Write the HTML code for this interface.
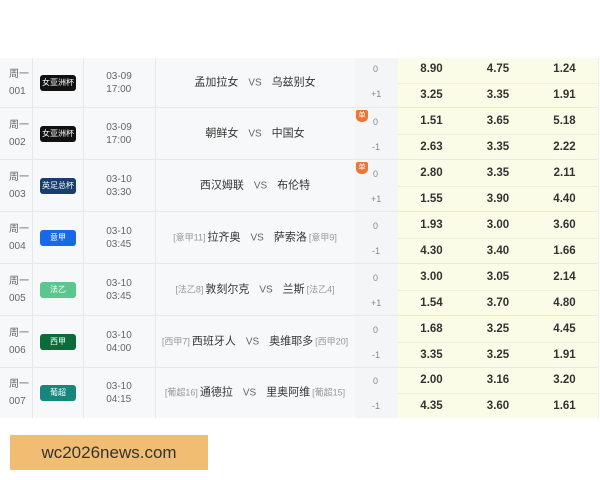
<!DOCTYPE html>
<html><head><meta charset="utf-8"><style>
body{margin:0;width:600px;height:480px;background:#fff;position:relative;overflow:hidden;font-family:"Liberation Sans","Noto Sans CJK SC",sans-serif;}
.row{position:absolute;left:0;width:598px;border-bottom:1px solid #e6e8eb;background:#f7f8f9;}
.c{position:absolute;top:0;bottom:0;border-right:1px solid #e6e8eb;}
.wk{left:0;width:33px;font-size:10px;color:#666;line-height:17px;padding-left:9px;box-sizing:border-box;display:flex;flex-direction:column;justify-content:center;}
.lg{left:33px;width:50px;display:flex;align-items:center;justify-content:center;}
.lg span{display:block;width:36px;height:16px;border-radius:3px;color:#fff;font-size:8px;line-height:16px;text-align:center;white-space:nowrap;overflow:hidden;}
.tm{left:83px;width:72px;font-size:10px;color:#666;line-height:13px;display:flex;flex-direction:column;justify-content:center;align-items:center;}
.tt{left:155px;width:200px;font-size:11px;color:#333;text-align:center;white-space:nowrap;}
.tt p{margin:0;position:absolute;left:0;right:0;top:50%;transform:translateY(-50%);line-height:14px;}
.tt .vs{color:#666;margin:0 10px;font-size:10px;}
.tt .r{color:#999;font-size:9px;margin:0 2px;}
.hc{left:355px;width:43px;background:#f4f5f6;font-size:9px;color:#888;}
.hc div{position:absolute;left:18px;}
.od{background:#fbfce8;font-size:11.5px;font-weight:bold;color:#333;border-right:1px solid #eef0dc;}
.od div{position:absolute;left:0;right:0;text-align:center;}
.od .hl{position:absolute;left:0;right:0;border-top:1px solid #eef0dc;}
.hc .dan{left:1px;width:12px;height:12px;background:#e9773a;border-radius:2px 2px 5px 5px;color:#fff;font-size:7px;line-height:12px;text-align:center;}
.wm{position:absolute;left:10px;top:435px;width:198px;height:35px;background:#f0bd72;color:#333;font-size:17px;line-height:35px;text-align:center;}
</style></head><body>
<div class="row" style="top:58px;height:49px"><div class="c wk">周一<br>001</div><div class="c lg"><span style="background:#111">女亚洲杯</span></div><div class="c tm">03-09<br>17:00</div><div class="c tt"><p>孟加拉女<span class="vs">VS</span>乌兹别女</p></div><div class="c hc"><div style="top:6px">0</div><div style="top:31px;left:16px">+1</div></div><div class="c od" style="left:398px;width:67px"><div style="top:5px">8.90</div><div class="hl" style="top:25px"></div><div style="top:31px">3.25</div></div><div class="c od" style="left:465px;width:66px"><div style="top:5px">4.75</div><div class="hl" style="top:25px"></div><div style="top:31px">3.35</div></div><div class="c od" style="left:531px;width:67px"><div style="top:5px">1.24</div><div class="hl" style="top:25px"></div><div style="top:31px">1.91</div></div></div>
<div class="row" style="top:108px;height:51px"><div class="c wk">周一<br>002</div><div class="c lg"><span style="background:#111">女亚洲杯</span></div><div class="c tm">03-09<br>17:00</div><div class="c tt"><p>朝鲜女<span class="vs">VS</span>中国女</p></div><div class="c hc"><div class="dan" style="top:2px">单</div><div style="top:9px">0</div><div style="top:34px;left:17px">-1</div></div><div class="c od" style="left:398px;width:67px"><div style="top:7px">1.51</div><div class="hl" style="top:26px"></div><div style="top:33px">2.63</div></div><div class="c od" style="left:465px;width:66px"><div style="top:7px">3.65</div><div class="hl" style="top:26px"></div><div style="top:33px">3.35</div></div><div class="c od" style="left:531px;width:67px"><div style="top:7px">5.18</div><div class="hl" style="top:26px"></div><div style="top:33px">2.22</div></div></div>
<div class="row" style="top:160px;height:51px"><div class="c wk">周一<br>003</div><div class="c lg"><span style="background:#173e6e">英足总杯</span></div><div class="c tm">03-10<br>03:30</div><div class="c tt"><p>西汉姆联<span class="vs">VS</span>布伦特</p></div><div class="c hc"><div class="dan" style="top:2px">单</div><div style="top:9px">0</div><div style="top:34px;left:16px">+1</div></div><div class="c od" style="left:398px;width:67px"><div style="top:7px">2.80</div><div class="hl" style="top:26px"></div><div style="top:33px">1.55</div></div><div class="c od" style="left:465px;width:66px"><div style="top:7px">3.35</div><div class="hl" style="top:26px"></div><div style="top:33px">3.90</div></div><div class="c od" style="left:531px;width:67px"><div style="top:7px">2.11</div><div class="hl" style="top:26px"></div><div style="top:33px">4.40</div></div></div>
<div class="row" style="top:212px;height:51px"><div class="c wk">周一<br>004</div><div class="c lg"><span style="background:#1769e6">意甲</span></div><div class="c tm">03-10<br>03:45</div><div class="c tt"><p><span class="r">[意甲11]</span>拉齐奥<span class="vs">VS</span>萨索洛<span class="r">[意甲9]</span></p></div><div class="c hc"><div style="top:9px">0</div><div style="top:34px;left:17px">-1</div></div><div class="c od" style="left:398px;width:67px"><div style="top:7px">1.93</div><div class="hl" style="top:26px"></div><div style="top:33px">4.30</div></div><div class="c od" style="left:465px;width:66px"><div style="top:7px">3.00</div><div class="hl" style="top:26px"></div><div style="top:33px">3.40</div></div><div class="c od" style="left:531px;width:67px"><div style="top:7px">3.60</div><div class="hl" style="top:26px"></div><div style="top:33px">1.66</div></div></div>
<div class="row" style="top:264px;height:51px"><div class="c wk">周一<br>005</div><div class="c lg"><span style="background:#5cc68f">法乙</span></div><div class="c tm">03-10<br>03:45</div><div class="c tt"><p><span class="r">[法乙8]</span>敦刻尔克<span class="vs">VS</span>兰斯<span class="r">[法乙4]</span></p></div><div class="c hc"><div style="top:9px">0</div><div style="top:34px;left:16px">+1</div></div><div class="c od" style="left:398px;width:67px"><div style="top:7px">3.00</div><div class="hl" style="top:26px"></div><div style="top:33px">1.54</div></div><div class="c od" style="left:465px;width:66px"><div style="top:7px">3.05</div><div class="hl" style="top:26px"></div><div style="top:33px">3.70</div></div><div class="c od" style="left:531px;width:67px"><div style="top:7px">2.14</div><div class="hl" style="top:26px"></div><div style="top:33px">4.80</div></div></div>
<div class="row" style="top:316px;height:51px"><div class="c wk">周一<br>006</div><div class="c lg"><span style="background:#0d6b3a">西甲</span></div><div class="c tm">03-10<br>04:00</div><div class="c tt"><p><span class="r">[西甲7]</span>西班牙人<span class="vs">VS</span>奥维耶多<span class="r">[西甲20]</span></p></div><div class="c hc"><div style="top:9px">0</div><div style="top:34px;left:17px">-1</div></div><div class="c od" style="left:398px;width:67px"><div style="top:7px">1.68</div><div class="hl" style="top:26px"></div><div style="top:33px">3.35</div></div><div class="c od" style="left:465px;width:66px"><div style="top:7px">3.25</div><div class="hl" style="top:26px"></div><div style="top:33px">3.25</div></div><div class="c od" style="left:531px;width:67px"><div style="top:7px">4.45</div><div class="hl" style="top:26px"></div><div style="top:33px">1.91</div></div></div>
<div class="row" style="top:368px;height:50px;border-bottom:none"><div class="c wk">周一<br>007</div><div class="c lg"><span style="background:#17877e">葡超</span></div><div class="c tm">03-10<br>04:15</div><div class="c tt"><p><span class="r">[葡超16]</span>通德拉<span class="vs">VS</span>里奥阿维<span class="r">[葡超15]</span></p></div><div class="c hc"><div style="top:8px">0</div><div style="top:33px;left:17px">-1</div></div><div class="c od" style="left:398px;width:67px"><div style="top:6px">2.00</div><div class="hl" style="top:25px"></div><div style="top:32px">4.35</div></div><div class="c od" style="left:465px;width:66px"><div style="top:6px">3.16</div><div class="hl" style="top:25px"></div><div style="top:32px">3.60</div></div><div class="c od" style="left:531px;width:67px"><div style="top:6px">3.20</div><div class="hl" style="top:25px"></div><div style="top:32px">1.61</div></div></div>
<div class="wm">wc2026news.com</div>
</body></html>
